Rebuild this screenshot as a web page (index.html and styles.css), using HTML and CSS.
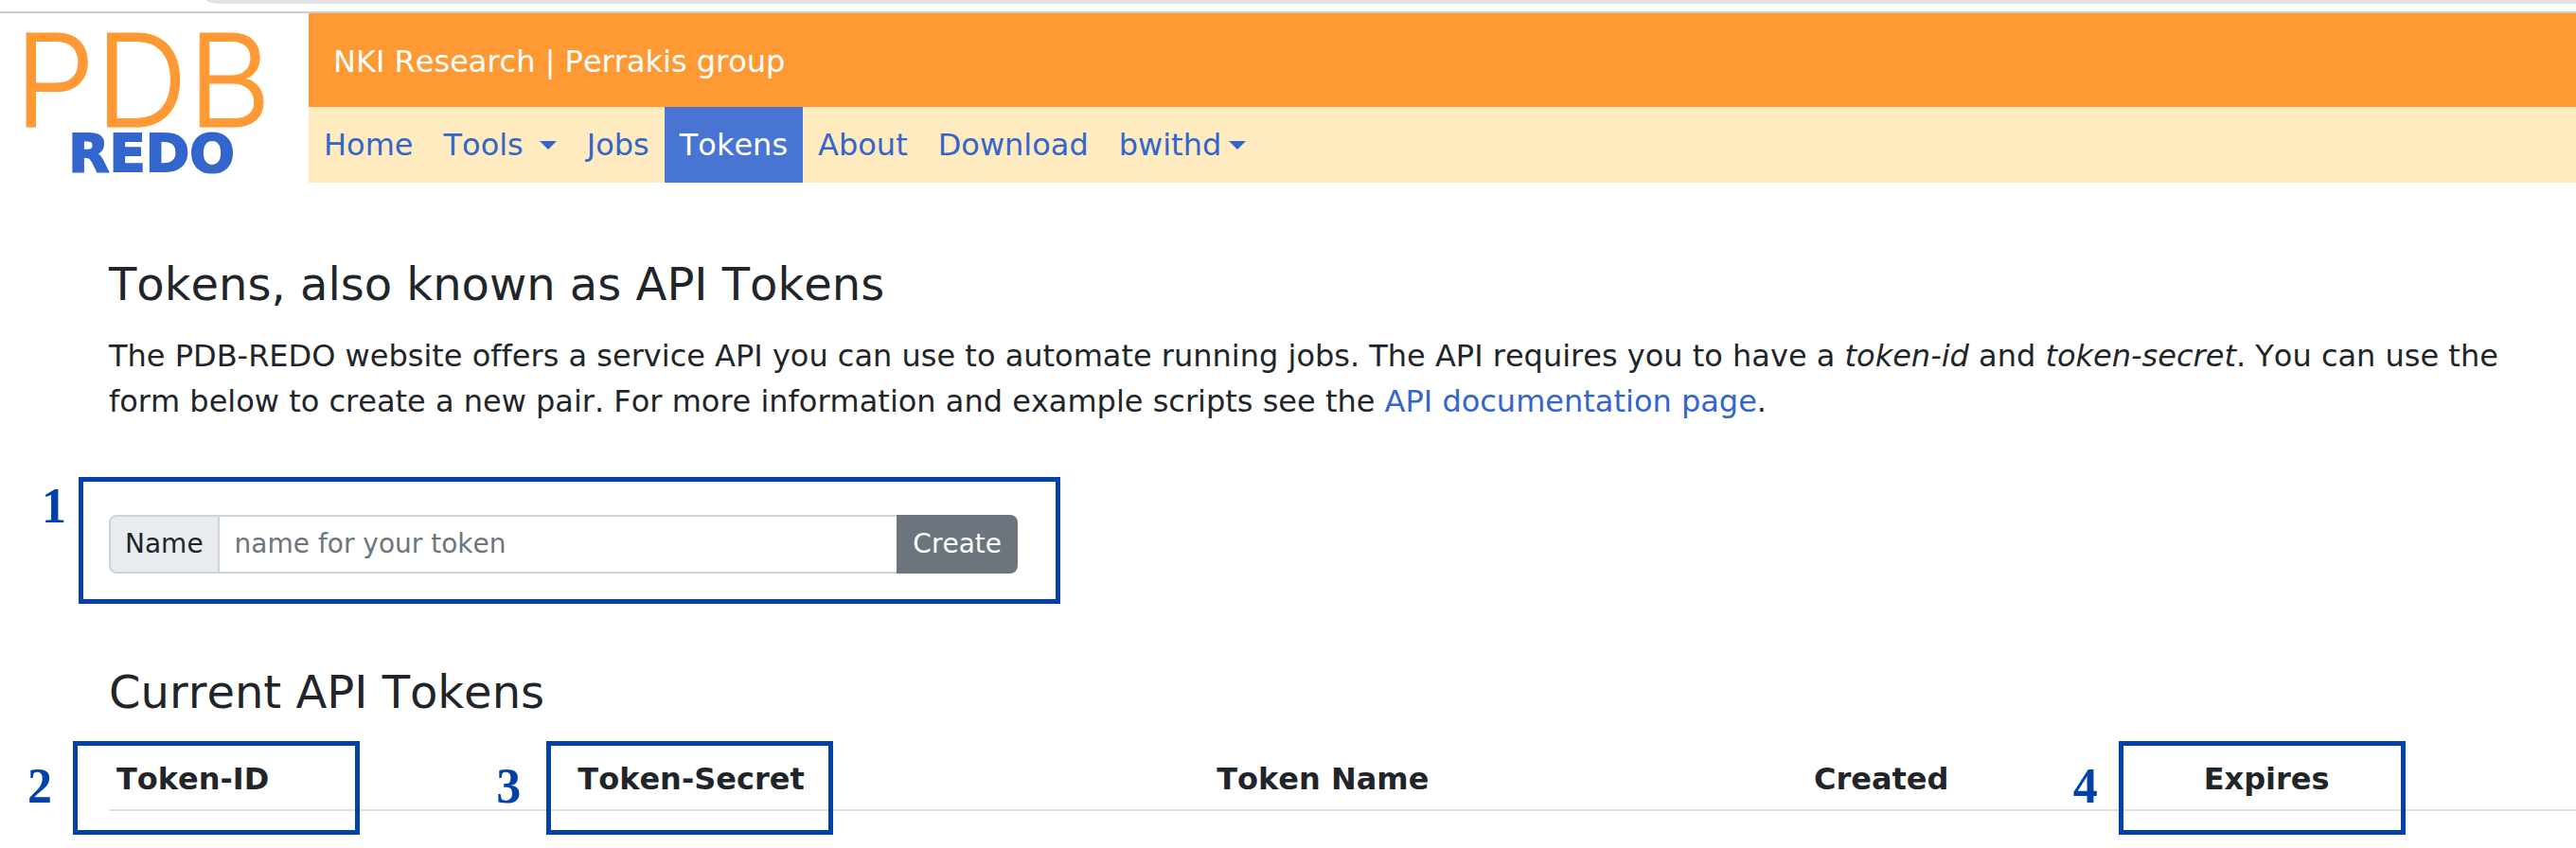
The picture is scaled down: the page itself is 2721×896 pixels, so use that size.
FILE: index.html
```html
<!DOCTYPE html>
<html lang="en">
<head>
<meta charset="utf-8">
<title>PDB-REDO Tokens</title>
<link rel="stylesheet" href="styles.css">
</head>
<body>
<div class="browser-edge"><div class="address-bar"></div></div>
<header class="site-header">
  <a class="logo" href="#" aria-label="PDB-REDO">
    <svg class="logo-art" viewBox="0 0 326 180">
      <text class="logo-pdb" x="15" y="120">PDB</text>
      <text class="logo-redo" x="160" y="167" text-anchor="middle">REDO</text>
    </svg>
  </a>
  <div class="bars">
    <div class="brand-bar">NKI Research | Perrakis group</div>
    <nav class="nav">
      <a class="nav-link" href="#">Home</a>
      <a class="nav-link" href="#">Tools <span class="caret caret-wide"></span></a>
      <a class="nav-link" href="#">Jobs</a>
      <a class="nav-link active" href="#">Tokens</a>
      <a class="nav-link" href="#">About</a>
      <a class="nav-link" href="#">Download</a>
      <a class="nav-link" href="#">bwithd<span class="caret"></span></a>
    </nav>
  </div>
</header>
<main class="content">
  <h1 class="heading">Tokens, also known as API Tokens</h1>
  <p class="intro">The PDB-REDO website offers a service API you can use to automate running jobs. The API requires you to have a <em>token-id</em> and <em>token-secret</em>. You can use the<br>form below to create a new pair. For more information and example scripts see the <a class="link" href="#">API documentation page</a>.</p>
  <form class="token-form">
    <label class="form-label" for="token-name">Name</label>
    <input class="form-input" id="token-name" type="text" placeholder="name for your token">
    <button class="form-button" type="button">Create</button>
    <span class="callout callout-form"><b class="callout-number">1</b></span>
  </form>
  <h2 class="heading">Current API Tokens</h2>
  <table class="tokens">
    <thead>
      <tr>
        <th class="col-id">Token-ID<span class="callout callout-id"><b class="callout-number">2</b></span></th>
        <th class="col-secret">Token-Secret<span class="callout callout-secret"><b class="callout-number">3</b></span></th>
        <th class="col-name">Token Name</th>
        <th class="col-created">Created</th>
        <th class="col-expires">Expires<span class="callout callout-expires"><b class="callout-number">4</b></span></th>
      </tr>
    </thead>
  </table>
</main>
</body>
</html>
```

FILE: styles.css
```css
* { box-sizing: border-box; }

body {
  margin: 0;
  background: #fff;
  color: #212529;
  font: 32px/48px Verdana, "DejaVu Sans", sans-serif;
  font-kerning: none;
  font-variant-ligatures: none;
}

a { text-decoration: none; }

.browser-edge {
  height: 14px;
  border-bottom: 2px solid #ccc;
}

.address-bar {
  height: 4px;
  margin-left: 218px;
  background: #e1e1e1;
  border-bottom-left-radius: 16px 4px;
}

.site-header { display: flex; }

.logo { flex: 0 0 326px; }

.logo-art {
  display: block;
  width: 100%;
  overflow: visible;
}

.logo-pdb {
  font: 300 136px Inter, sans-serif;
  fill: #ff9933;
  stroke: #ff9933;
  stroke-width: 1px;
}

.logo-redo {
  font: 700 56px "DejaVu Sans", sans-serif;
  fill: #3366cc;
  stroke: #3366cc;
  stroke-width: 2px;
}

.bars { flex: 1; }

.brand-bar {
  padding: 27px 26px 24px;
  background: #ff9933;
  color: #fff;
}

.nav {
  display: flex;
  background: #ffebbf;
}

.nav-link {
  display: flex;
  align-items: center;
  padding: 16px;
  color: #3366cc;
}

.nav-link.active {
  background: #4775d1;
  color: #fff;
}

.caret {
  margin-left: 8px;
  border: 9px solid transparent;
  border-top-color: #3366cc;
  border-bottom: 0;
}

.caret-wide { margin-left: 17px; }

.content { padding: 77px 0 39px 115px; }

.heading {
  margin: 0;
  font-size: 48px;
  font-weight: 400;
  line-height: 58px;
}

.intro { margin: 23px 0 96px; }

.link { color: #3366cc; }

.token-form {
  position: relative;
  display: flex;
  width: 960px;
  height: 62px;
  margin-bottom: 96px;
  font-size: 28px;
}

.form-label {
  padding: 5px 15px 0;
  background: #e9ecef;
  border: 2px solid #ced4da;
  border-radius: 8px 0 0 8px;
}

.form-input {
  flex: 1;
  min-width: 0;
  padding: 0 16px;
  border: solid #ced4da;
  border-width: 2px 0;
  background: #fff;
  color: #212529;
  font: inherit;
}

.form-input::placeholder { color: #6c757d; }

.form-button {
  padding: 0 17px;
  background: #6c757d;
  border: 0;
  border-radius: 0 8px 8px 0;
  color: #fff;
  font: inherit;
}

.tokens {
  width: 100%;
  margin-top: 31px;
  table-layout: fixed;
  border-spacing: 0;
}

.tokens th {
  position: relative;
  padding: 8px;
  border-bottom: 2px solid #dee2e6;
  text-align: left;
}

.col-id { width: 18.7%; }
.col-secret { width: 25.9%; }
.col-name { width: 24.2%; }
.col-created { width: 15.8%; }

.callout {
  position: absolute;
  top: -8px;
  width: 303px;
  height: 99px;
  border: 5px solid #0042aa;
}

.callout-form {
  top: -40px;
  left: -32px;
  width: 1037px;
  height: 134px;
}

.callout-id { left: -38px; }
.callout-secret { left: -25px; }
.callout-expires { left: -82px; }

.callout-number {
  position: absolute;
  top: 14px;
  right: 100%;
  margin-right: 27px;
  color: #0042aa;
  font: 700 52px/58px "Liberation Serif", serif;
}

.callout-secret .callout-number { margin-right: 32px; }

.callout-form .callout-number {
  top: -3px;
  margin-right: 18px;
}
```
